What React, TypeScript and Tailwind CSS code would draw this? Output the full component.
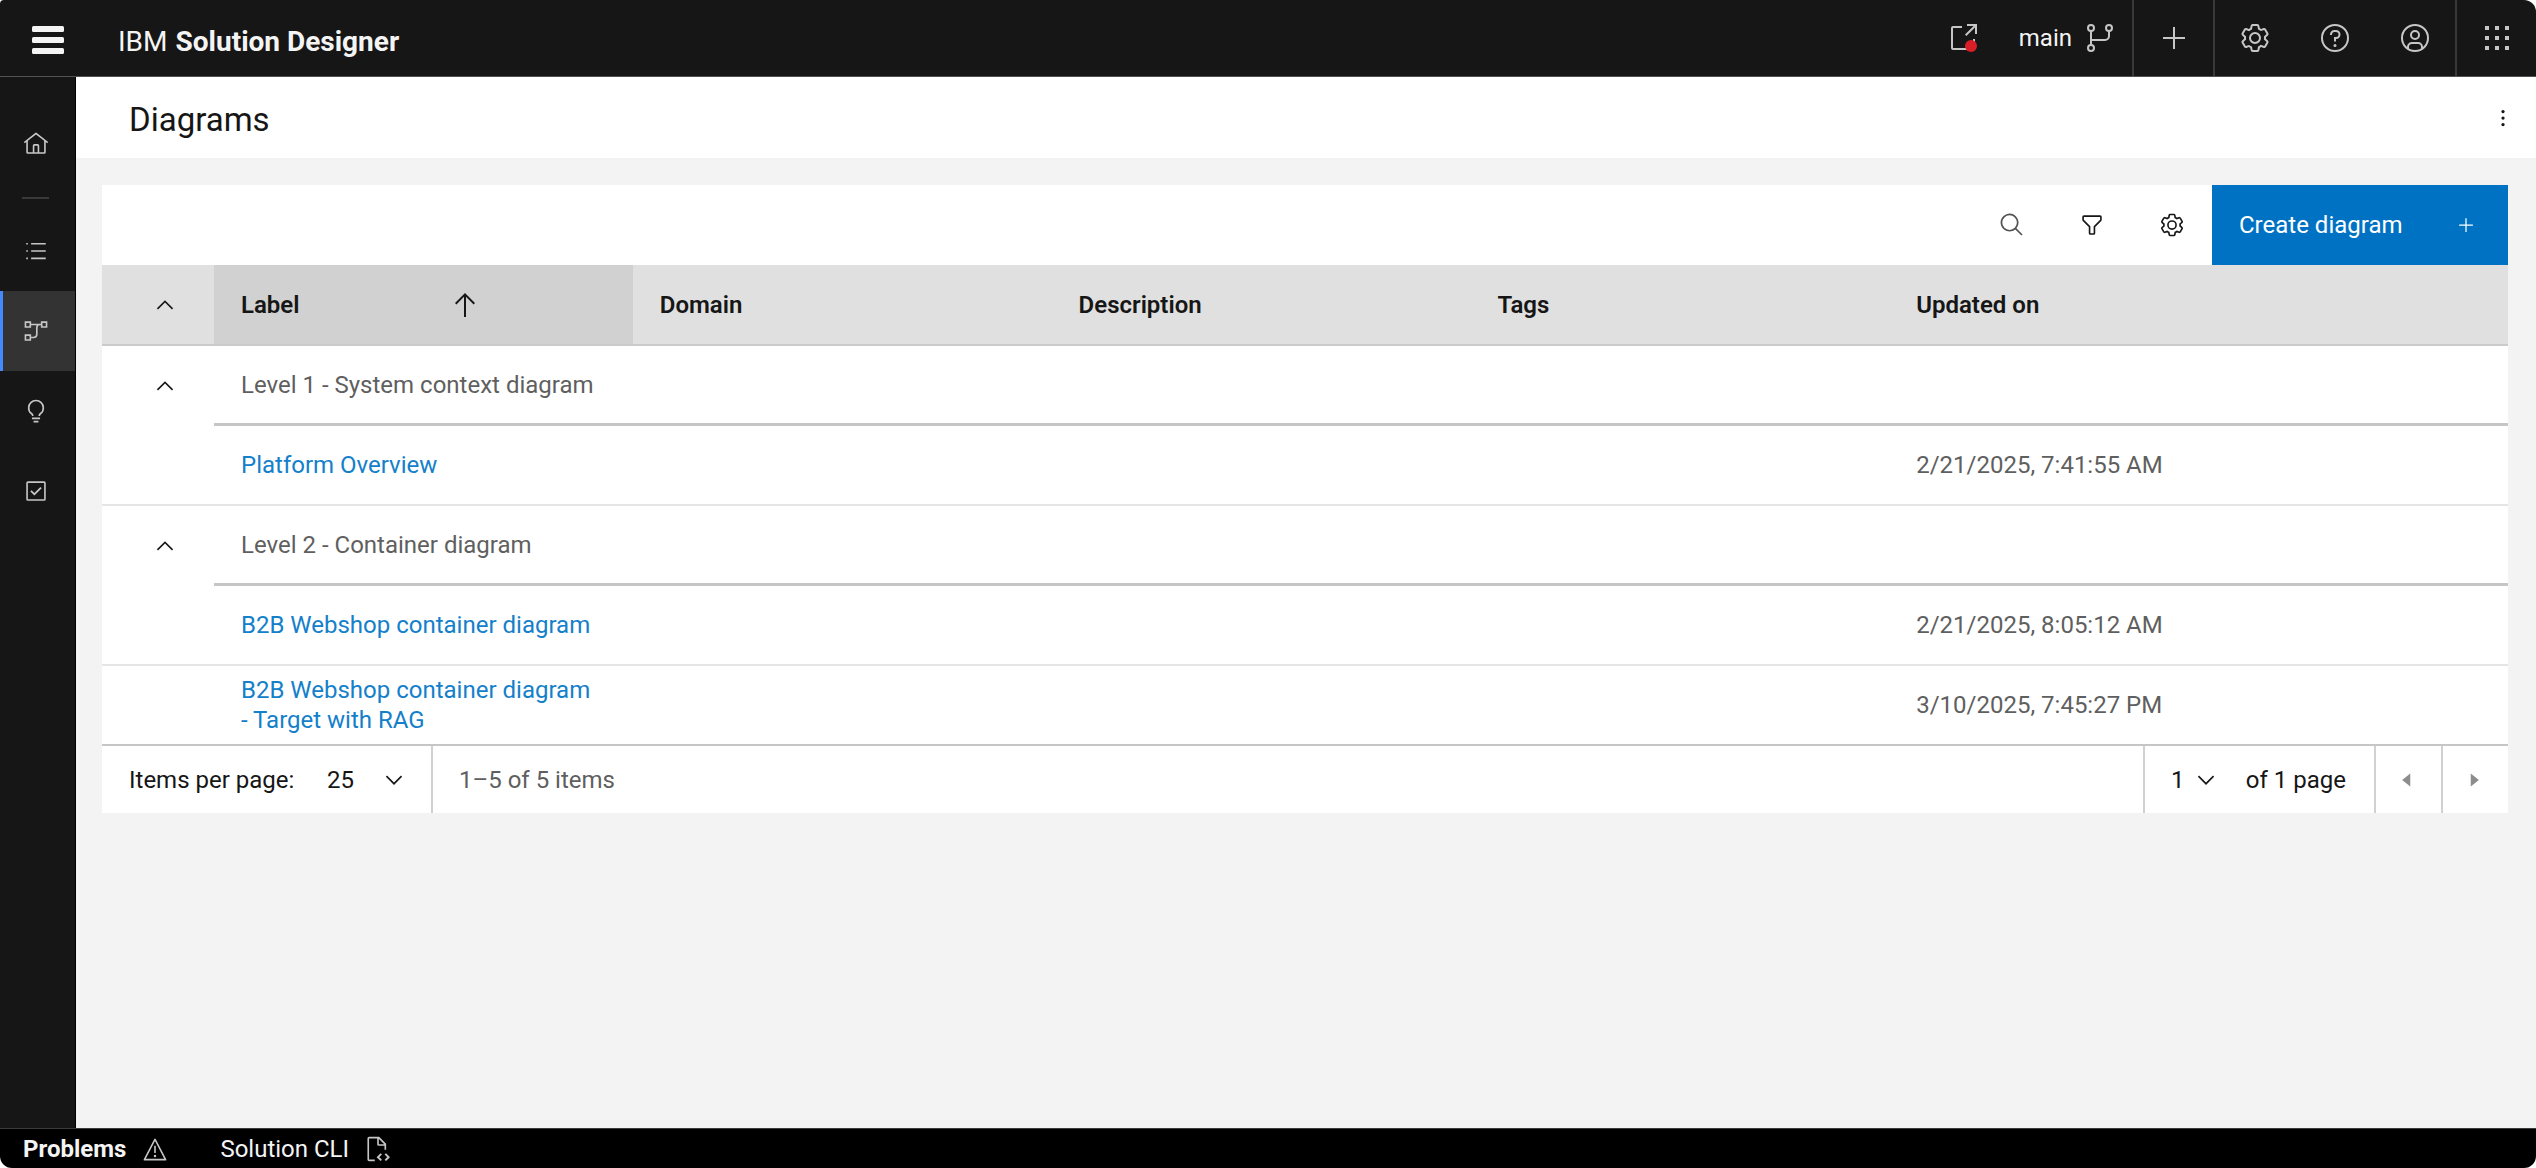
import { useState, type ReactNode } from "react";

type IconProps = { className?: string };

const GEAR =
  "M27,16.76c0-.25,0-.5,0-.76s0-.51,0-.77l1.92-1.68A2,2,0,0,0,29.3,11L26.94,7a2,2,0,0,0-1.73-1,2,2,0,0,0-.64.1l-2.43.82a11.35,11.35,0,0,0-1.31-.75l-.51-2.52a2,2,0,0,0-2-1.61H13.64a2,2,0,0,0-2,1.61l-.51,2.52a11.48,11.48,0,0,0-1.32.75L7.43,6.06A2,2,0,0,0,6.79,6,2,2,0,0,0,5.06,7L2.7,11a2,2,0,0,0,.41,2.51L5,15.24c0,.25,0,.5,0,.76s0,.51,0,.77L3.11,18.45A2,2,0,0,0,2.7,21L5.06,25a2,2,0,0,0,1.73,1,2,2,0,0,0,.64-.1l2.43-.82a11.35,11.35,0,0,0,1.31.75l.51,2.52a2,2,0,0,0,2,1.61h4.72a2,2,0,0,0,2-1.61l.51-2.52a11.48,11.48,0,0,0,1.32-.75l2.42.82a2,2,0,0,0,.64.1,2,2,0,0,0,1.73-1L29.3,21a2,2,0,0,0-.41-2.51ZM25.21,24l-3.43-1.16a8.86,8.86,0,0,1-2.71,1.57L18.36,28H13.64l-.71-3.55a9.36,9.36,0,0,1-2.7-1.57L6.79,24,4.43,20l2.72-2.4a8.9,8.9,0,0,1,0-3.13L4.43,12,6.79,8l3.43,1.16a8.86,8.86,0,0,1,2.71-1.57L13.64,4h4.72l.71,3.55a9.36,9.36,0,0,1,2.7,1.57L25.21,8,27.57,12l-2.72,2.4a8.9,8.9,0,0,1,0,3.13L27.57,20Z";
const RING =
  "M16,22a6,6,0,1,1,6-6A5.94,5.94,0,0,1,16,22Zm0-10a3.91,3.91,0,0,0-4,4,3.91,3.91,0,0,0,4,4,3.91,3.91,0,0,0,4-4A3.91,3.91,0,0,0,16,12Z";

function Icon({ className = "size-7", children }: IconProps & { children: ReactNode }) {
  return (
    <svg viewBox="0 0 32 32" fill="currentColor" className={`${className} shrink-0`} aria-hidden="true">
      {children}
    </svg>
  );
}

function Stroked({ className, children }: IconProps & { children: ReactNode }) {
  return (
    <Icon className={className}>
      <g fill="none" stroke="currentColor" strokeWidth="2">
        {children}
      </g>
    </Icon>
  );
}

const Gear = ({ className }: IconProps) => (
  <Icon className={className}>
    <path d={GEAR} />
    <path d={RING} />
  </Icon>
);
const Home = ({ className }: IconProps) => (
  <Icon className={className}>
    <path d="M16.6123,2.2138a1.01,1.01,0,0,0-1.2427,0L1,13.4194l1.2427,1.5717L4,13.6208V26a2.0041,2.0041,0,0,0,2,2H26a2.0037,2.0037,0,0,0,2-2V13.63L29.7573,15,31,13.4282ZM18,26H14V18h4Zm2,0V18a2.0023,2.0023,0,0,0-2-2H14a2.002,2.002,0,0,0-2,2v8H6V12.0615l10-7.79,10,7.8005V26Z" />
  </Icon>
);
const List = ({ className }: IconProps) => (
  <Icon className={className}>
    <path d="M10 6h18v2H10zM10 24h18v2H10zM10 15h18v2H10zM4 15h2v2H4zM4 6h2v2H4zM4 24h2v2H4z" />
  </Icon>
);
const Flow = ({ className }: IconProps) => (
  <Stroked className={className}>
    <path d="M3 5h6v6H3zM23 5h6v6h-6zM3 21h6v6H3zM9 8h14M9 24h4a4 4 0 0 0 4-4V12a4 4 0 0 1 4-4" />
  </Stroked>
);
const Bulb = ({ className }: IconProps) => (
  <Icon className={className}>
    <path d="M11 24H21V26H11zM13 28H19V30H13zM16,2A10,10,0,0,0,6,12a9.19,9.19,0,0,0,3.46,7.62c1,.93,1.54,1.46,1.54,2.38h2c0-1.84-1.11-2.87-2.19-3.86A7.2,7.2,0,0,1,8,12a8,8,0,0,1,16,0,7.2,7.2,0,0,1-2.82,6.14c-1.07,1-2.18,2-2.18,3.86h2c0-.92.53-1.45,1.54-2.39A9.18,9.18,0,0,0,26,12,10,10,0,0,0,16,2Z" />
  </Icon>
);
const Task = ({ className }: IconProps) => (
  <Icon className={className}>
    <path d="M26,4H6A2,2,0,0,0,4,6V26a2,2,0,0,0,2,2H26a2,2,0,0,0,2-2V6A2,2,0,0,0,26,4ZM6,26V6H26V26Z" />
    <path d="M14 21.5L9 16.54 10.59 15 14 18.35 21.41 11 23 12.58 14 21.5z" />
  </Icon>
);
const ChevronUp = ({ className }: IconProps) => (
  <Icon className={className}>
    <path d="M16 10L26 20 24.6 21.4 16 12.8 7.4 21.4 6 20z" />
  </Icon>
);
const ChevronDown = ({ className }: IconProps) => (
  <Icon className={className}>
    <path d="M16 22L6 12 7.4 10.6 16 19.2 24.6 10.6 26 12z" />
  </Icon>
);
const ArrowUp = ({ className }: IconProps) => (
  <Icon className={className}>
    <path d="M16 4L6 14 7.41 15.41 15 7.83 15 28 17 28 17 7.83 24.59 15.41 26 14 16 4z" />
  </Icon>
);
const Search = ({ className }: IconProps) => (
  <Icon className={className}>
    <path d="M29,27.5859l-7.5521-7.5521a11.0177,11.0177,0,1,0-1.4141,1.4141L27.5859,29ZM4,13a9,9,0,1,1,9,9A9.01,9.01,0,0,1,4,13Z" />
  </Icon>
);
const Filter = ({ className }: IconProps) => (
  <Icon className={className}>
    <path d="M18,28H14a2,2,0,0,1-2-2V18.41L4.59,11A2,2,0,0,1,4,9.59V6A2,2,0,0,1,6,4H26a2,2,0,0,1,2,2V9.59A2,2,0,0,1,27.41,11L20,18.41V26A2,2,0,0,1,18,28ZM6,6V9.59l8,8V26h4V17.59l8-8V6Z" />
  </Icon>
);
const Plus = ({ className }: IconProps) => (
  <Icon className={className}>
    <path d="M17 15V5h-2v10H5v2h10v10h2V17h10v-2z" />
  </Icon>
);
const Launch = ({ className }: IconProps) => (
  <Icon className={className}>
    <path d="M26 28H6a2 2 0 0 1-2-2V6a2 2 0 0 1 2-2h9v2H6v20h20v-9h2v9a2 2 0 0 1-2 2z" />
    <path d="M20 2v2h6.59L18 12.59 19.41 14 28 5.41V12h2V2z" />
  </Icon>
);
const Branch = ({ className }: IconProps) => (
  <Stroked className={className}>
    <circle cx="7" cy="6" r="3" />
    <circle cx="25" cy="6" r="3" />
    <circle cx="7" cy="26" r="3" />
    <path d="M7 9v14M25 9v5a4 4 0 0 1-4 4H7" />
  </Stroked>
);
const Help = ({ className }: IconProps) => (
  <Icon className={className}>
    <path d="M16,2A14,14,0,1,0,30,16,14,14,0,0,0,16,2Zm0,26A12,12,0,1,1,28,16,12,12,0,0,1,16,28Z" />
    <circle cx="16" cy="23.5" r="1.5" />
    <path d="M17,8H15.5A4.49,4.49,0,0,0,11,12.5V13h2v-.5A2.5,2.5,0,0,1,15.5,10H17a2.5,2.5,0,0,1,0,5H15v4.5h2V17a4.5,4.5,0,0,0,0-9Z" />
  </Icon>
);
const User = ({ className }: IconProps) => (
  <Stroked className={className}>
    <circle cx="16" cy="16" r="13" />
    <circle cx="16" cy="13" r="4" />
    <path d="M9 27v-2a4 4 0 0 1 4-4h6a4 4 0 0 1 4 4v2" />
  </Stroked>
);
const Switcher = ({ className }: IconProps) => (
  <Icon className={className}>
    <path d="M4 4h4v4H4zM14 4h4v4h-4zM24 4h4v4h-4zM4 14h4v4H4zM14 14h4v4h-4zM24 14h4v4h-4zM4 24h4v4H4zM14 24h4v4h-4zM24 24h4v4h-4z" />
  </Icon>
);
const Overflow = ({ className }: IconProps) => (
  <Icon className={className}>
    <circle cx="16" cy="8" r="2" />
    <circle cx="16" cy="16" r="2" />
    <circle cx="16" cy="24" r="2" />
  </Icon>
);
const Menu = ({ className }: IconProps) => (
  <Icon className={className}>
    <rect x="0" y="2" width="32" height="6" rx="1.5" />
    <rect x="0" y="13" width="32" height="6" rx="1.5" />
    <rect x="0" y="24" width="32" height="6" rx="1.5" />
  </Icon>
);
const Warning = ({ className }: IconProps) => (
  <Icon className={className}>
    <path d="M16,23a1.5,1.5,0,1,0,1.5,1.5A1.5,1.5,0,0,0,16,23Z" />
    <path d="M15 12h2v9h-2z" />
    <path d="M29,30H3a1,1,0,0,1-.89-1.46l13-25a1,1,0,0,1,1.78,0l13,25A1,1,0,0,1,29,30ZM4.65,28h22.7L16.002,6.17Z" />
  </Icon>
);
const DocCode = ({ className }: IconProps) => (
  <Stroked className={className}>
    <path d="M12 30H5a1 1 0 0 1-1-1V3a1 1 0 0 1 1-1h12l8 8v7M16 2v8a1 1 0 0 0 1 1h8" />
    <path d="M20 22l-4 4 4 4M25 22l4 4-4 4" strokeWidth="2.5" />
  </Stroked>
);
const Caret = ({ className, left }: IconProps & { left?: boolean }) => (
  <Icon className={className}>
    <path d={left ? "M20 24L10 16 20 8z" : "M12 8L22 16 12 24z"} />
  </Icon>
);

const groups = [
  {
    name: "Level 1 - System context diagram",
    rows: [{ label: "Platform Overview", updated: "2/21/2025, 7:41:55 AM" }],
  },
  {
    name: "Level 2 - Container diagram",
    rows: [
      { label: "B2B Webshop container diagram", updated: "2/21/2025, 8:05:12 AM" },
      { label: "B2B Webshop container diagram - Target with RAG", updated: "3/10/2025, 7:45:27 PM" },
    ],
  },
];

const headerCell = "h-[81px] border-b-2 border-[#cbcbcb] px-[27px] text-left align-middle font-semibold text-[#161616]";
const toolButton = "flex w-20 items-center justify-center";
const navLink = "flex h-20 items-center border-l-3 pl-5 text-[#c6c6c6]";

function Header() {
  return (
    <header className="flex h-[77px] shrink-0 items-stretch border-b border-[#525252] bg-[#161616] text-[#c6c6c6]">
      <button aria-label="Menu" className="flex items-center pt-1 pr-12 pl-8 text-[#f4f4f4]">
        <Menu className="size-8" />
      </button>
      <a href="#home" className="flex items-center gap-2 pt-2 pl-1.5 text-[28px] text-[#f4f4f4]">
        IBM <b className="font-bold">Solution Designer</b>
      </a>
      <div className="ml-auto flex items-stretch">
        <button aria-label="Open changes" className="flex w-20 items-center justify-center">
          <span className="relative">
            <Launch className="size-8" />
            <span className="absolute right-0.5 bottom-0.5 size-3 rounded-full bg-[#da1e28]" />
          </span>
        </button>
        <button className="flex items-center gap-3 px-4 text-2xl text-[#f4f4f4]">
          main
          <Branch className="size-8 text-[#c6c6c6]" />
        </button>
        <button aria-label="Add" className="flex w-[83px] items-center justify-center border-x-2 border-[#393939]">
          <Plus className="size-8" />
        </button>
        <button aria-label="Settings" className={toolButton}><Gear className="size-8" /></button>
        <button aria-label="Help" className={toolButton}><Help className="size-8" /></button>
        <button aria-label="Account" className={toolButton}><User className="size-8" /></button>
        <button aria-label="Applications" className="flex w-[81px] items-center justify-center border-l-2 border-[#393939]">
          <Switcher className="size-8" />
        </button>
      </div>
    </header>
  );
}

function Sidebar() {
  return (
    <nav aria-label="Main" className="w-[76px] shrink-0 border-r border-black bg-[#161616] pt-[27px]">
      <a href="#home" aria-label="Home" className={`${navLink} border-transparent`}><Home className="size-[26px]" /></a>
      <hr className="mt-[13px] mb-3 ml-[22px] w-[27px] border-t-2 border-[#393939]" />
      <a href="#list" aria-label="List" className={`${navLink} border-transparent`}><List className="size-[26px]" /></a>
      <a href="#diagrams" aria-label="Diagrams" aria-current="page" className={`${navLink} border-[#4589ff] bg-[#333333]`}>
        <Flow className="size-[26px]" />
      </a>
      <a href="#ideas" aria-label="Ideas" className={`${navLink} border-transparent`}><Bulb className="size-[26px]" /></a>
      <a href="#tasks" aria-label="Tasks" className={`${navLink} border-transparent`}><Task className="size-[26px]" /></a>
    </nav>
  );
}

function DiagramTable() {
  return (
    <table className="w-full table-fixed border-separate border-spacing-0 bg-white text-2xl text-[#5f5f5f]">
      <colgroup>
        <col className="w-28" />
        <col />
        <col />
        <col />
        <col />
        <col />
        <col className="w-50" />
      </colgroup>
      <thead>
        <tr className="bg-[#e0e0e0]">
          <th className="h-[81px] border-b-2 border-[#cbcbcb] pl-3.5 align-middle">
            <button aria-label="Collapse all" className="flex w-full justify-center text-[#161616]"><ChevronUp className="size-[26px]" /></button>
          </th>
          <th aria-sort="ascending" className={`${headerCell} bg-[#d1d1d1]`}>
            <button className="flex w-60 items-center justify-between font-semibold">
              Label
              <ArrowUp className="size-8" />
            </button>
          </th>
          <th className={headerCell}>Domain</th>
          <th className={headerCell}>Description</th>
          <th className={headerCell}>Tags</th>
          <th className={headerCell}>Updated on</th>
          <td className="h-[81px] border-b-2 border-[#cbcbcb]" />
        </tr>
      </thead>
      {groups.map((group, g) => (
        <tbody key={group.name}>
          <tr>
            <td className="h-20 pl-3.5">
              <button aria-label={`Collapse ${group.name}`} className="flex w-full justify-center text-[#161616]"><ChevronUp className="size-[26px]" /></button>
            </td>
            <th scope="rowgroup" colSpan={6} className="h-20 border-b-3 border-[#c6c6c6] px-[27px] text-left font-normal">
              {group.name}
            </th>
          </tr>
          {group.rows.map((row, r) => {
            const last = g === groups.length - 1 && r === group.rows.length - 1;
            const line = last ? "h-20 border-b-2 border-[#c6c6c6]" : "h-20 border-b-2 border-[#e5e5e5]";
            return (
              <tr key={row.label}>
                <td className={line} />
                <td className={`${line} pr-10 pl-[27px] leading-[30px]`}>
                  <a href="#diagram" className="text-[#1480ca]">{row.label}</a>
                </td>
                <td className={line} />
                <td className={line} />
                <td className={line} />
                <td className={`${line} px-[27px]`}>{row.updated}</td>
                <td className={line} />
              </tr>
            );
          })}
        </tbody>
      ))}
    </table>
  );
}

function Pagination() {
  const [size, setSize] = useState("25");
  return (
    <div className="flex h-[67px] items-stretch bg-white text-2xl text-[#161616]">
      <div className="flex w-[331px] items-center justify-between border-r-2 border-[#d1d1d1] pr-6 pl-[27px]">
        <label htmlFor="page-size">Items per page:</label>
        <span className="grid items-center">
          <select
            id="page-size"
            value={size}
            onChange={(e) => setSize(e.target.value)}
            className="col-start-1 row-start-1 w-20 appearance-none bg-transparent"
          >
            <option>25</option>
            <option>50</option>
          </select>
          <ChevronDown className="pointer-events-none col-start-1 row-start-1 size-[26px] justify-self-end" />
        </span>
      </div>
      <span className="flex items-center pl-[26px] text-[#5f5f5f]">1–5 of 5 items</span>
      <div className="ml-auto flex w-[231px] items-center justify-between border-l-2 border-[#d1d1d1] pr-7 pl-[26px]">
        <span className="grid items-center">
          <select id="page" aria-label="Page" className="col-start-1 row-start-1 w-12 appearance-none bg-transparent">
            <option>1</option>
          </select>
          <ChevronDown className="pointer-events-none col-start-1 row-start-1 size-[26px] justify-self-end" />
        </span>
        <label htmlFor="page">of 1 page</label>
      </div>
      <button aria-label="Previous page" className="flex w-[67px] items-center justify-center border-l-2 border-[#d1d1d1] pr-1 text-[#8d8d8d]">
        <Caret left className="size-[26px]" />
      </button>
      <button aria-label="Next page" className="flex w-[67px] items-center justify-center border-l-2 border-[#d1d1d1] pr-1 text-[#8d8d8d]">
        <Caret className="size-[26px]" />
      </button>
    </div>
  );
}

export default function App() {
  return (
    <div className="flex min-h-screen flex-col overflow-hidden rounded-xl rounded-tl-sm bg-[#f3f3f3] [font-family:Roboto,sans-serif]">
      <Header />
      <div className="flex grow">
        <Sidebar />
        <main className="min-w-0 grow">
          <div className="flex h-[81px] items-center justify-between bg-white pr-5 pl-[53px]">
            <h1 className="pt-1 text-[33px] text-[#161616]">Diagrams</h1>
            <button aria-label="More options" className="text-[#161616]"><Overflow className="size-[26px]" /></button>
          </div>
          <section aria-label="Diagrams" className="mt-[27px] mr-7 ml-[26px]">
            <div className="flex h-20 items-stretch justify-end bg-white text-[#161616]">
              <button aria-label="Search" className={`${toolButton} text-[#525252]`}><Search className="size-[26px]" /></button>
              <button aria-label="Filter" className={toolButton}><Filter className="size-[26px]" /></button>
              <button aria-label="Table settings" className={toolButton}><Gear className="size-[26px]" /></button>
              <button className="flex w-[296px] items-center justify-between bg-[#0072c3] pr-8 pl-[27px] text-2xl text-white">
                Create diagram
                <Plus className="size-5" />
              </button>
            </div>
            <DiagramTable />
            <Pagination />
          </section>
        </main>
      </div>
      <footer className="flex h-10 shrink-0 items-center gap-13 border-t border-[#393939] bg-black pl-[23px] text-2xl text-[#f4f4f4]">
        <button className="flex items-center gap-4 font-bold">
          Problems
          <Warning className="size-[26px] text-[#c6c6c6]" />
        </button>
        <button className="flex items-center gap-4">
          Solution CLI
          <DocCode className="size-[26px] text-[#c6c6c6]" />
        </button>
      </footer>
    </div>
  );
}
